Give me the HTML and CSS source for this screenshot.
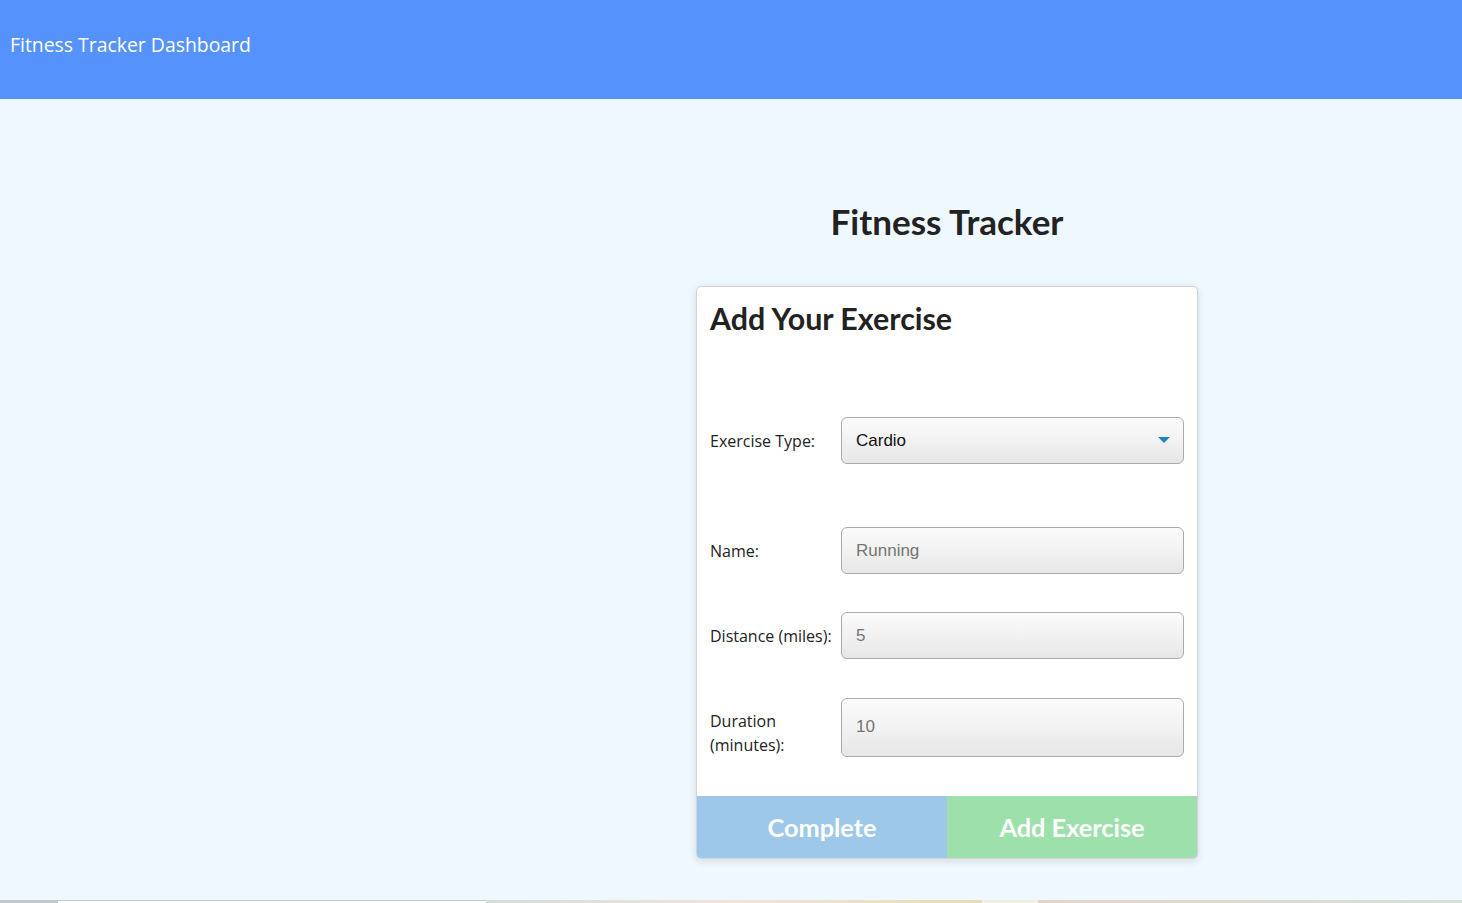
FILE: index.html
```html
<!DOCTYPE html>
<html>
<head>
<meta charset="utf-8">
<link rel="stylesheet" href="styles.css">
</head>
<body>
<header class="topbar">
  <span class="brand">Fitness Tracker Dashboard</span>
</header>
<main class="layout">
  <div class="spacer"></div>
  <section class="content">
    <h1 class="page-title">Fitness Tracker</h1>
    <div class="card">
      <h2 class="card-title">Add Your Exercise</h2>
      <div class="form">
        <div class="row row-first">
          <label class="label">Exercise Type:</label>
          <div class="field select">
            <span class="value">Cardio</span>
            <svg class="caret" width="12" height="7" viewBox="0 0 12 7"><path d="M0 0H12L6 6Z" fill="#1a86c8"/></svg>
          </div>
        </div>
        <div class="row row-second">
          <label class="label">Name:</label>
          <div class="field"><span class="value muted">Running</span></div>
        </div>
        <div class="row">
          <label class="label">Distance (miles):</label>
          <div class="field"><span class="value muted">5</span></div>
        </div>
        <div class="row">
          <label class="label label-low">Duration<br>(minutes):</label>
          <div class="field tall"><span class="value muted">10</span></div>
        </div>
      </div>
      <div class="actions">
        <button class="btn btn-complete">Complete</button>
        <button class="btn btn-add">Add Exercise</button>
      </div>
    </div>
  </section>
</main>
<div class="strip">
  <div class="seg s1"></div>
  <div class="seg s2"></div>
  <div class="seg s3"></div>
  <div class="seg s4"></div>
  <div class="seg s5"></div>
</div>
</body>
</html>
```
FILE: styles.css
```css
html, body {
  margin: 0;
  padding: 0;
}
body {
  background: #eff7ff;
  width: 1462px;
  height: 903px;
  overflow: hidden;
  font-family: "Open Sans", "Noto Sans", sans-serif;
}
.topbar {
  height: 99px;
  background: #5592fb;
  display: flex;
  align-items: center;
  padding-left: 10px;
  box-sizing: border-box;
}
.brand {
  color: #ffffff;
  font-size: 19.4px;
  margin-top: -11px;
}
.layout {
  display: flex;
}
.spacer {
  width: 696px;
}
.content {
  width: 502px;
  display: flex;
  flex-direction: column;
  align-items: center;
}
.page-title {
  font-family: Lato, sans-serif;
  font-weight: 700;
  font-size: 35px;
  color: #222;
  margin: 100px 0 0 0;
  line-height: 44px;
}
.card {
  margin-top: 43px;
  width: 502px;
  box-sizing: border-box;
  background: #fff;
  border: 1px solid #d4d4d4;
  border-radius: 5px;
  box-shadow: 0 2px 8px rgba(0,0,0,0.12);
  overflow: hidden;
}
.card-title {
  font-family: Lato, sans-serif;
  font-weight: 700;
  font-size: 30.4px;
  color: #222;
  margin: 12px 0 0 13px;
  line-height: 38px;
}
.form {
  padding: 0 13px 0 13px;
}
.row {
  display: flex;
  align-items: center;
  margin-top: 38px;
}
.row-first {
  margin-top: 80px;
}
.row-second {
  margin-top: 63px;
}
.label {
  width: 131px;
  flex: none;
  font-size: 16px;
  color: #222;
  line-height: 24px;
}
.label-low {
  margin-top: 12px;
}
.field {
  flex: 1;
  height: 47px;
  box-sizing: border-box;
  border: 1px solid #ababab;
  border-radius: 6px;
  background: linear-gradient(#fcfcfc, #e7e7e7);
  display: flex;
  align-items: center;
  padding: 0 14px 0 14px;
}
.field.tall {
  height: 59px;
}
.select {
  justify-content: space-between;
}
.value {
  font-family: "Liberation Sans", Arial, sans-serif;
  font-size: 17px;
  color: #111;
}
.value.muted {
  color: #757575;
}
.caret {
  margin-right: -1px;
}
.actions {
  margin-top: 39px;
  display: flex;
}
.btn {
  flex: 1;
  height: 62px;
  border: none;
  margin: 0;
  font-family: Lato, sans-serif;
  font-weight: 700;
  font-size: 25.3px;
  color: #fff;
  cursor: pointer;
}
.btn-complete {
  background: #9dc8e9;
}
.btn-add {
  background: #9ee0ab;
}
.strip {
  position: absolute;
  left: 0;
  top: 900px;
  width: 1462px;
  height: 3px;
  display: flex;
}
.seg { height: 3px; }
.s1 { width: 58px; background: #c8c8c8; }
.s2 { width: 428px; background: #ffffff; border-top: 1px solid #c8c8c8; box-sizing: border-box; }
.s3 { width: 496px; background: linear-gradient(90deg, #d8dcd8, #f0e4dc, #e8dcb8); }
.s4 { width: 56px; background: #f2efe2; }
.s5 { flex: 1; background: linear-gradient(90deg, #e4d4c8, #d8e0d8); }
```
